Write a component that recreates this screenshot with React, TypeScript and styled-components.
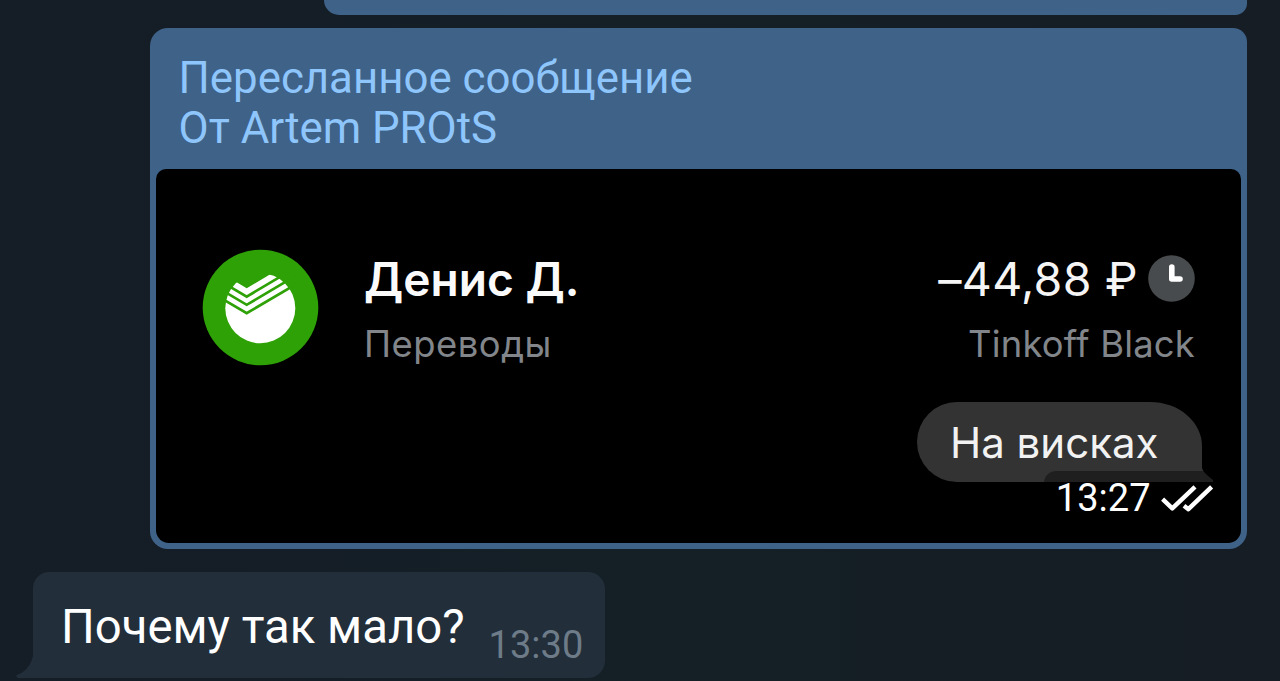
import styled, { createGlobalStyle } from 'styled-components';

const GlobalStyle = createGlobalStyle`
  * {
    box-sizing: border-box;
  }

  body {
    margin: 0;
    background: #151e26;
  }
`;

const SberLogo = () => (
  <Avatar viewBox="0 0 116 116">
    <circle cx="57.5" cy="57.5" r="57.8" fill="#2ea106" />
    <circle cx="57.3" cy="58.2" r="35" fill="#fff" />
    <path d="M22 25.3L43.7 38.2L71 22.1H22Z" fill="#2ea106" />
    <g fill="none" stroke="#2ea106" strokeWidth="2.7">
      <path d="M20 32.7L43.7 46.6L88 20.4" />
      <path d="M18 39.7L43.7 54.8L93 25.7" />
      <path d="M18 48.1L43.7 63.2L97 31.9" />
    </g>
  </Avatar>
);

const PendingIcon = () => (
  <svg width="47" height="47" viewBox="0 0 47 47" fill="none">
    <circle cx="23.5" cy="23.5" r="23.3" fill="#484b4d" />
    <path d="M23.8 12V24H32" stroke="#fff" strokeWidth="5.6" strokeLinecap="round" strokeLinejoin="round" />
  </svg>
);

const ReadChecks = () => (
  <svg width="54" height="30" viewBox="0 0 54 30" fill="none" stroke="#fff" strokeWidth="4.4">
    <path d="M2.6 16.2L12.3 25.4L35 3.8" strokeLinejoin="round" />
    <path d="M24 22.8L28.4 26.2L51.6 3.8" strokeLinejoin="round" />
  </svg>
);

const App = () => {
  return (
    <Chat>
      <GlobalStyle />
      <PreviousBubble />
      <ForwardedBubble>
        <ForwardedFrom>
          Пересланное сообщение
          <br />
          От Artem PROtS
        </ForwardedFrom>
        <Photo>
          <Transaction>
            <SberLogo />
            <Details>
              <Name>Денис Д.</Name>
              <Caption $spacing={0.5}>Переводы</Caption>
            </Details>
            <Details $end>
              <AmountRow>
                <Amount>–44,88 ₽</Amount>
                <PendingIcon />
              </AmountRow>
              <Caption $spacing={0.2}>Tinkoff Black</Caption>
            </Details>
          </Transaction>
          <Note>
            На висках
            <NoteTail viewBox="0 0 11 14">
              <path d="M0 0C1 4 6 8 11 12V14H0Z" fill="#333" />
            </NoteTail>
          </Note>
          <SentBadge>
            13:27
            <ReadChecks />
          </SentBadge>
        </Photo>
      </ForwardedBubble>
      <IncomingBubble>
        <MessageText>Почему так мало?</MessageText>
        <Time>13:30</Time>
        <IncomingTail viewBox="0 0 18 32">
          <path d="M18 0C18 15 12 25 0.8 29Q-0.5 31 2 32H18Z" fill="#222e39" />
        </IncomingTail>
      </IncomingBubble>
    </Chat>
  );
};

const Chat = styled.div`
  display: flex;
  flex-direction: column;
  height: 681px;
  padding: 0 33px;
  overflow: hidden;
  background: linear-gradient(90deg, #151d26, #141f26 50%, #161d24);
  font-family: Roboto, 'Liberation Sans', sans-serif;
`;

const PreviousBubble = styled.div`
  flex: none;
  align-self: flex-end;
  width: 923px;
  height: 15px;
  border-radius: 0 0 14px 18px;
  background: #3f6289;
`;

const ForwardedBubble = styled.div`
  flex: none;
  align-self: flex-end;
  width: 1097px;
  height: 521.5px;
  margin-top: 12.7px;
  padding: 25px 6px 6px;
  border-radius: 18px 14px 18px 18px;
  background: #3f6289;
`;

const ForwardedFrom = styled.div`
  height: 116px;
  padding-left: 22.6px;
  color: #8ec6fc;
  font-size: 43.8px;
  line-height: 50px;
`;

const Photo = styled.div`
  position: relative;
  display: flex;
  flex-direction: column;
  height: 374.5px;
  padding: 81px 46px 0 47px;
  border-radius: 10px 10px 13px 13px;
  background: #000;
  font-family: Inter, 'Liberation Sans', sans-serif;
`;

const Transaction = styled.div`
  display: flex;
  align-items: flex-start;
  height: 116px;
`;

const Avatar = styled.svg`
  flex: none;
  width: 116px;
  height: 116px;
  margin-right: 45px;
  overflow: visible;
`;

const Details = styled.div<{ $end?: boolean }>`
  display: flex;
  flex-direction: column;
  gap: 16px;
  align-items: ${({ $end }) => ($end ? 'flex-end' : 'flex-start')};
  margin-left: ${({ $end }) => ($end ? 'auto' : '0')};
`;

const Name = styled.div`
  padding-top: 1px;
  color: #fafafa;
  font-size: 46.1px;
  font-weight: 600;
  line-height: 56px;
`;

const AmountRow = styled.div`
  display: flex;
  align-items: center;
  gap: 10px;
  height: 57px;
`;

const Amount = styled.div`
  padding-top: 1px;
  color: #f5f5f5;
  font-size: 46.5px;
  letter-spacing: 0.3px;
  line-height: 56px;
  white-space: nowrap;
`;

const Caption = styled.div<{ $spacing: number }>`
  color: #82868b;
  font-size: 36.4px;
  font-variant-ligatures: none;
  letter-spacing: ${({ $spacing }) => $spacing}px;
  line-height: 43px;
`;

const Note = styled.div`
  position: relative;
  align-self: flex-end;
  width: 285px;
  height: 80px;
  margin: 36px -7px 0 0;
  padding: 1px 0 0 33px;
  border-radius: 40px 52px 0 40px / 40px 44px 0 40px;
  background: #333;
  color: #f2f2f2;
  font-size: 42px;
  line-height: 80px;
`;

const NoteTail = styled.svg`
  position: absolute;
  right: -10.5px;
  bottom: 0;
  width: 11px;
  height: 14px;
`;

const SentBadge = styled.div`
  position: absolute;
  right: 15px;
  bottom: 20px;
  display: flex;
  align-items: center;
  gap: 9.5px;
  height: 52px;
  padding: 2px 12px 0 12px;
  border-radius: 12px;
  background: rgba(0, 0, 0, 0.38);
  color: #fff;
  font-family: Roboto, 'Liberation Sans', sans-serif;
  font-size: 38px;
  line-height: 50px;
`;

const IncomingBubble = styled.div`
  position: relative;
  flex: none;
  align-self: flex-start;
  display: flex;
  gap: 24px;
  height: 106px;
  margin-top: 22.5px;
  padding: 0 22px 0 28px;
  border-radius: 16px 17px 17px 0;
  background: #222e39;
`;

const MessageText = styled.div`
  padding-top: 3px;
  color: #fff;
  font-size: 47.3px;
  line-height: 105px;
`;

const Time = styled.div`
  align-self: flex-end;
  margin-bottom: 11px;
  color: #6d7c88;
  font-size: 38px;
  line-height: 44px;
`;

const IncomingTail = styled.svg`
  position: absolute;
  left: -17.5px;
  bottom: 0;
  width: 18px;
  height: 32px;
`;

export default App;
